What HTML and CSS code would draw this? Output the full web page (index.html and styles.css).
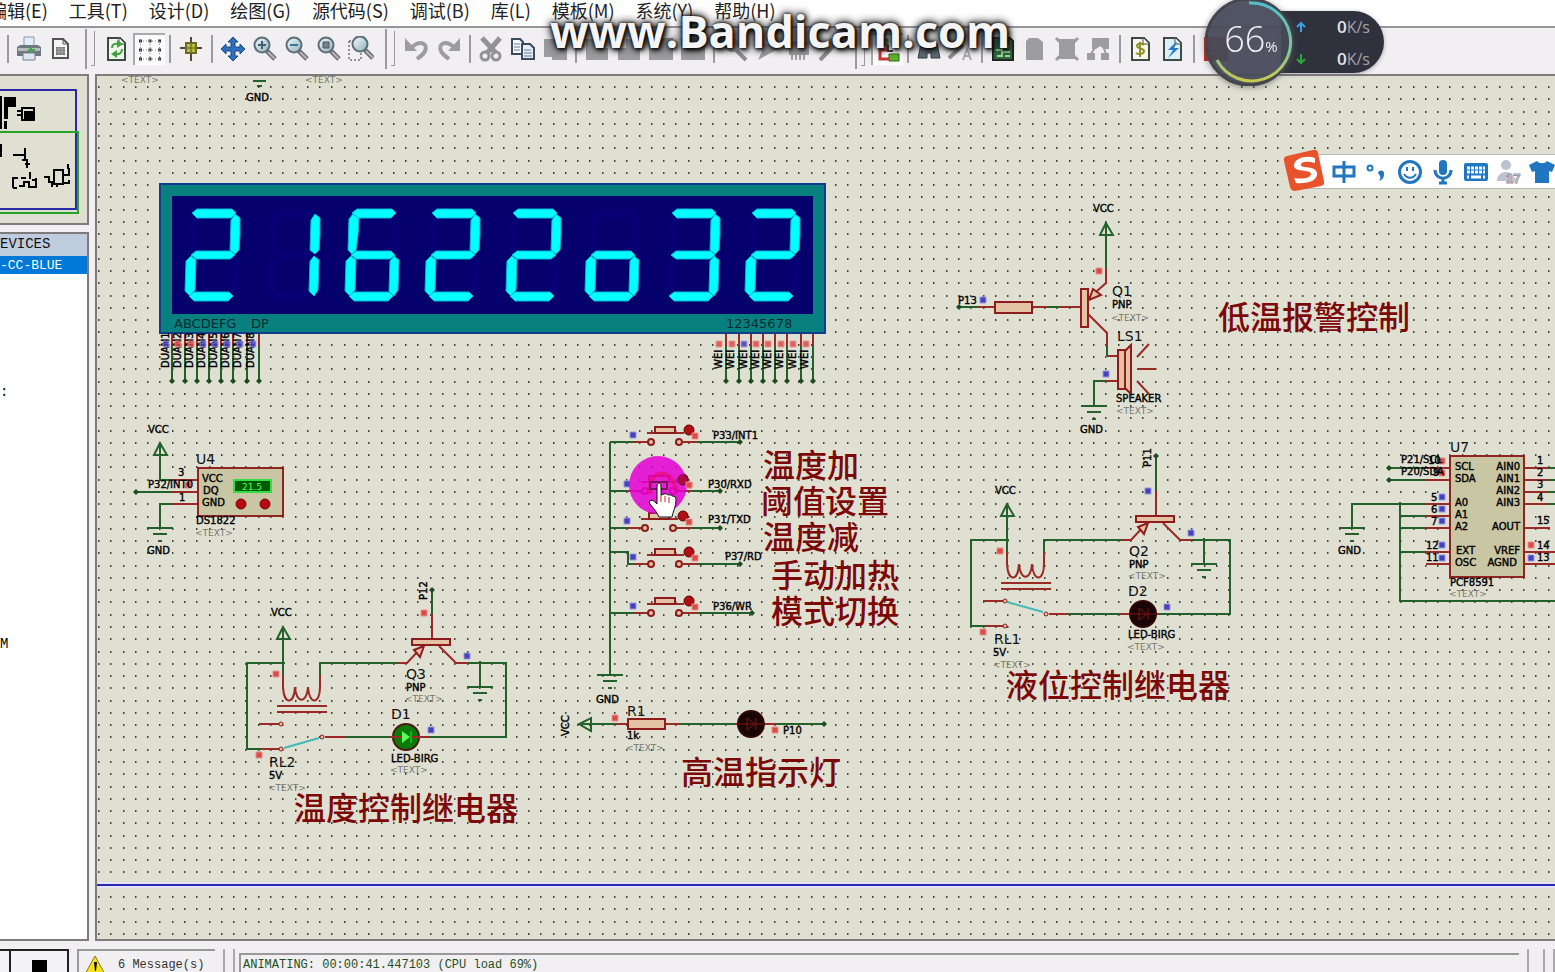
FILE: index.html
```html
<!DOCTYPE html>
<html lang="zh-CN">
<head>
<meta charset="utf-8">
<title>Schematic Capture</title>
<link rel="stylesheet" href="styles.css">
</head>
<body>
<nav class="menu">
  <a href="#">编辑(E)</a><a href="#">工具(T)</a><a href="#">设计(D)</a><a href="#">绘图(G)</a><a href="#">源代码(S)</a><a href="#">调试(B)</a><a href="#">库(L)</a><a href="#">模板(M)</a><a href="#">系统(Y)</a><a href="#">帮助(H)</a>
</nav>

<svg class="defs" aria-hidden="true">
  <defs>
    <linearGradient id="steel" x1="0" y1="0" x2="1" y2="1"><stop offset="0" stop-color="#f4fbfd"/><stop offset="1" stop-color="#8fb0bd"/></linearGradient>
    <g id="lens">
      <path d="M15 15l8 8" stroke="#6d6d70" stroke-width="5"/><path d="M16 16l7 7" stroke="#b5b5b8" stroke-width="2"/>
      <circle cx="10" cy="9" r="7.5" fill="url(#steel)" stroke="#5e6e76" stroke-width="2"/>
    </g>
    <g id="sheet"><path d="M4 2h12l5 5v17H4z" stroke="#3f4a44" stroke-width="2"/><path d="M15 2v6h6" fill="#fff" stroke="#3f4a44"/></g>
  </defs>
</svg>

<div class="toolbar" role="toolbar" aria-label="Tools">
  <span class="sep"></span>
  <button class="tool" aria-label="Print"><svg viewBox="0 0 26 26"><path d="M8 10V1h10v9" fill="#e4eefb" stroke="#8b98a8"/><path d="M1 11l3-2h18l3 2v9H1z" fill="#6f7780"/><path d="M2 12h22v3H2z" fill="#b4bcc2"/><path d="M7 17h12v7H7z" fill="#dfe8f2" stroke="#76808c"/><path d="M12 14h7M15 11v6" stroke="#49a54a" stroke-width="2"/></svg></button>
  <button class="tool" aria-label="Print area"><svg viewBox="0 0 26 26"><path d="M5 3h10l5 5v14H5z" fill="#f6f6f6" stroke="#555" stroke-width="2"/><path d="M15 3v5h5" fill="none" stroke="#555"/><path d="M8 11h9v8H8z" fill="#777"/><path d="M8 13h9M8 16h9M11 11v8M14 11v8" stroke="#aaa"/></svg></button>
  <span class="grip"></span>
  <button class="tool" aria-label="Redraw"><svg viewBox="0 0 26 26"><g fill="#eef7ea"><use href="#sheet"/></g><path d="M8 12c0-4 3-5 7-4M18 13c0 4-3 6-7 5" fill="none" stroke="#3fa13f" stroke-width="2"/><path d="M13 4l6 4-6 4zM13 14l-6 4 6 4z" fill="#3fa13f"/></svg></button>
  <button class="tool pressed" aria-label="Toggle grid"><svg viewBox="0 0 26 26"><g stroke="#333" stroke-width="3" stroke-dasharray="3 6.5"><path d="M2 4h24M2 13h24M2 22h24"/></g><g stroke="#888" stroke-dasharray="1 2"><path d="M3 4h20M3 13h20M3 22h20M3.500 4v19M13 4v19M22.500 4v19"/></g></svg></button>
  <span class="sep"></span>
  <button class="tool" aria-label="Origin"><svg viewBox="0 0 26 26"><path d="M13 1v24M2 12h22" stroke="#4c4b2b" stroke-width="2"/><path d="M8 7h10v10H8z" fill="#bcbc3e" stroke="#6a6a20" stroke-width="2"/><path d="M13 8v8M9 12h8" stroke="#5d5d22"/></svg></button>
  <span class="sep"></span>
  <button class="tool" aria-label="Pan"><svg viewBox="0 0 26 26"><path d="M13 1l5 5h-3v5h5V8l5 5-5 5v-3h-5v5h3l-5 5-5-5h3v-5H6v3l-5-5 5-5v3h5V6H8z" fill="#2f6fbd" stroke="#174a86"/></svg></button>
  <button class="tool" aria-label="Zoom in"><svg viewBox="0 0 26 26"><use href="#lens"/><path d="M6 9h8M10 5v8" stroke="#41606f" stroke-width="2"/></svg></button>
  <button class="tool" aria-label="Zoom out"><svg viewBox="0 0 26 26"><use href="#lens"/><path d="M6 9h8" stroke="#3678a0" stroke-width="2"/></svg></button>
  <button class="tool" aria-label="Zoom all"><svg viewBox="0 0 26 26"><use href="#lens"/><path d="M7 6h6v6H7z" fill="#77818a" stroke="#4c565e"/></svg></button>
  <button class="tool" aria-label="Zoom area"><svg viewBox="0 0 26 26"><path d="M1 5h12v19H1z" fill="none" stroke="#333" stroke-dasharray="2 2"/><g transform="translate(2 -1)"><use href="#lens"/></g></svg></button>
  <span class="grip"></span>
  <button class="tool" aria-label="Undo"><svg viewBox="0 0 26 26"><path d="M8 11C18 3 24 9 21 15c-1 3-4 5-8 8" fill="none" stroke="#9d9da0" stroke-width="4"/><path d="M1 2v13h12z" fill="#9d9da0"/></svg></button>
  <button class="tool" aria-label="Redo"><svg viewBox="0 0 26 26"><path d="M18 11C8 3 2 9 5 15c1 3 4 5 8 8" fill="none" stroke="#9d9da0" stroke-width="4"/><path d="M24 2v13H12z" fill="#9d9da0"/></svg></button>
  <span class="sep"></span>
  <button class="tool" aria-label="Cut"><svg viewBox="0 0 26 26"><path d="M4 2l14 15M22 2L9 17" stroke="#939396" stroke-width="5"/><circle cx="7" cy="20" r="4" fill="none" stroke="#939396" stroke-width="3"/><circle cx="18" cy="20" r="4" fill="none" stroke="#939396" stroke-width="3"/></svg></button>
  <button class="tool" aria-label="Copy"><svg viewBox="0 0 26 26"><path d="M2 3h8l3 3v12H2z" fill="#f4f7fb" stroke="#3b4b5e" stroke-width="2"/><path d="M12 8h8l4 4v11H12z" fill="#e5edf7" stroke="#3b4b5e" stroke-width="2"/><path d="M4 8h6M4 11h6M4 14h6M14 14h7M14 17h8M14 20h8" stroke="#6c7c90"/></svg></button>
  <button class="tool" aria-label="Paste"><svg viewBox="0 0 26 26"><path d="M2 3h18v6h5v15H10v-3H2z" fill="#9d9da0"/></svg></button>
  <span class="sep"></span>
  <button class="tool" aria-label="Block copy"><svg viewBox="0 0 26 26"><path d="M2 3h10v9h12v12H2z" fill="#9d9da0"/></svg></button>
  <button class="tool" aria-label="Block move"><svg viewBox="0 0 26 26"><path d="M2 12h8V3h9v9h5v12H2z" fill="#9d9da0"/></svg></button>
  <button class="tool" aria-label="Block rotate"><svg viewBox="0 0 26 26"><path d="M1 2h24v22H1z" fill="#9d9da0"/></svg></button>
  <button class="tool" aria-label="Block delete"><svg viewBox="0 0 26 26"><path d="M1 2h24v22H1z" fill="#9d9da0"/></svg></button>
  <span class="sep"></span>
  <button class="tool" aria-label="Pick parts"><svg viewBox="0 0 26 26"><path d="M13 13l11 11" stroke="#8f8f92" stroke-width="4"/><circle cx="10" cy="9" r="7" fill="#a8a8aa"/></svg></button>
  <button class="tool" aria-label="Make device"><svg viewBox="0 0 26 26"><path d="M2 3l22 10L4 24l4-9z" fill="#a0a0a3"/></svg></button>
  <button class="tool" aria-label="Packaging"><svg viewBox="0 0 26 26"><path d="M3 5h20v14H3z" fill="#a0a0a3"/><path d="M6 19v5M10 19v5M14 19v5M18 19v5" stroke="#a0a0a3" stroke-width="2"/></svg></button>
  <button class="tool" aria-label="Decompose"><svg viewBox="0 0 26 26"><path d="M2 24L20 5" stroke="#8f8f92" stroke-width="4"/><path d="M12 2l12 8-3 4-12-8z" fill="#8f8f92"/></svg></button>
  <span class="grip"></span>
  <button class="tool pressed" aria-label="Wire autorouter"><svg viewBox="0 0 26 26"><path d="M3 2h10v6H3zM14 17h10v7H14z" fill="#5cb52c" stroke="#2d6418"/><path d="M12 8v5H5v9h9" fill="none" stroke="#c43a36" stroke-width="3"/><path d="M13 8v6h5" fill="none" stroke="#333" stroke-width="2"/></svg></button>
  <span class="sep"></span>
  <button class="tool" aria-label="Search"><svg viewBox="0 0 26 26"><path d="M5 8h6v5h4V8h6l3 14h-9v-5h-4v5H2z" fill="#5b6b74" stroke="#2e3c44"/></svg></button>
  <button class="tool" aria-label="Property assignment"><svg viewBox="0 0 26 26"><path d="M1 22L15 9" stroke="#8f8f92" stroke-width="4"/><path d="M15 24l4-11 4 11M16 20h6" fill="none" stroke="#aaa" stroke-width="2"/></svg></button>
  <span class="sep"></span>
  <button class="tool" aria-label="Design explorer"><svg viewBox="0 0 26 26"><path d="M3 2h17l3 3v19H3z" fill="#2e6a3b" stroke="#222" stroke-width="2"/><path d="M6 14h6v-4h7M7 20h5v-4h8M15 20h5" fill="none" stroke="#9ed79a" stroke-width="2"/></svg></button>
  <button class="tool" aria-label="New sheet"><svg viewBox="0 0 26 26"><path d="M4 5l3-3h9l5 4v18H4z" fill="#9d9da0"/></svg></button>
  <button class="tool" aria-label="Remove sheet"><svg viewBox="0 0 26 26"><path d="M5 3h16v20H5z" fill="#9d9da0"/><path d="M2 2l22 22M24 2L2 24" stroke="#9d9da0" stroke-width="3"/></svg></button>
  <button class="tool" aria-label="Exit to parent"><svg viewBox="0 0 26 26"><path d="M6 2h17v11h-5l-4-3-4 3H6z" fill="#9d9da0"/><path d="M10 10l-5 8M17 10l3 8" stroke="#9d9da0" stroke-width="2"/><path d="M1 17h8v7H1zM15 17h8v7h-8z" fill="#9d9da0"/></svg></button>
  <span class="sep"></span>
  <button class="tool" aria-label="Bill of materials"><svg viewBox="0 0 26 26"><g fill="#f6f7ee"><use href="#sheet"/></g><path d="M16 9c-2-2-7-2-7 1s7 2 7 5-5 4-8 2M12 6v15" fill="none" stroke="#8f8f1e" stroke-width="2"/></svg></button>
  <button class="tool" aria-label="Electrical rules"><svg viewBox="0 0 26 26"><g fill="#dcf0fb"><use href="#sheet"/></g><path d="M16 6l-8 8h5l-5 8 11-10h-5l3-6z" fill="#2a79c4"/></svg></button>
  <span class="sep"></span>
  <button class="tool" aria-label="Netlist to layout"><svg viewBox="0 0 26 26"><path d="M2 1h24v24H2z" fill="#c3231d"/><path d="M5 14V5h4v9M5 10h4M12 14V5h4v4h-4l4 5M23 5h-4v9h4M19 9h3M4 18h20" fill="none" stroke="#f0a090" stroke-width="1"/></svg></button>
</div>

<main class="work">
  <aside class="side">
    <div class="overview">
      <svg aria-label="Sheet overview">
        <path d="M-2 14h78v119h-80" fill="none" stroke="#2a2aa8" stroke-width="2"/>
        <path d="M-2 56h80v81h-80" fill="none" stroke="#28a428" stroke-width="2"/>
        <path d="M0 20h2v33H0zM4 21h12v10H8v12H4zM4 45h3v8H4zM24 35h9v9h-9zM0 68h2v13H0zM0 93h2M0 99h2"/>
        <g fill="none" stroke="#000" stroke-width="2"><path d="M22 32h12v12H22zM17 35h5M17 39h5M13 79h12M25 72v12M22 84h5v8M25 88h5M13 101v11M13 102h5M13 112h4M19 110h5v-4h5v5h7v-9M21 102h5M30 96v7M32 104h4M44 101h5v5h5M54 94h9v14h-9zM48 106h4v5M64 99h5v-7M64 107h5v-3M68 88v5M57 109v2"/></g>
      </svg>
    </div>
    <section class="devices">
      <h2>EVICES</h2>
      <ul><li class="on">-CC-BLUE</li><li class="row-s">:</li><li class="row-m">M</li></ul>
    </section>
  </aside>

  <svg class="sheet" aria-label="Schematic">
    <defs>
      <pattern id="grid" x="98" y="86" width="86" height="135" patternUnits="userSpaceOnUse">
        <g id="gridrows">
          <g id="grow" fill="#45453c"><path id="dots" d="M0 0h1v2h-1zM12 0h1v2h-1zM25 0h1v2h-1zM37 0h1v2h-1zM49 0h1v2h-1zM61 0h1v2h-1zM74 0h1v2h-1z"/><path opacity=".5" d="M1 0h1v2h-1zM13 0h1v2h-1zM26 0h1v2h-1zM38 0h1v2h-1zM50 0h1v2h-1zM62 0h1v2h-1zM75 0h1v2h-1z"/></g>
          <use href="#grow" y="12"/><use href="#grow" y="25"/><use href="#grow" y="37"/><use href="#grow" y="49"/><use href="#grow" y="61"/><use href="#grow" y="74"/><use href="#grow" y="86"/><use href="#grow" y="98"/><use href="#grow" y="110"/><use href="#grow" y="123"/>
        </g>
      </pattern>
      <path id="sa" d="M192 213l5-4h35l4 4-5 5h-34z"/>
      <path id="sb" d="M235 214l5 4v17l-1 15-4 4-5-4 1-30z"/>
      <path id="sc" d="M234 256l5 4-1 30-4 6-5-5 1-30z"/>
      <path id="sd" d="M189 296l5-4h35l4 4-5 5h-34z"/>
      <path id="se" d="M191 256l5 4-1 30-5 6-5-5 1-30z"/>
      <path id="sf" d="M193 214l6 4-1 17-2 15-4 4-4-4 1-31z"/>
      <path id="sg" d="M191 255l5-4h35l4 4-5 4h-34z"/>
      <g id="d2"><use href="#sa"/><use href="#sb"/><use href="#sg"/><use href="#se"/><use href="#sd"/></g>
      <g id="d8"><use href="#d2"/><use href="#sc"/><use href="#sf"/></g>
      <path id="rs" class="hi" d="M-3-3h6v6h-6z"/>
      <path id="bs" class="lo" d="M-3-3h6v6h-6z"/>
      <g id="gnd" class="g"><path d="M-13 0h26M-7 6h14M-2 13h4"/></g>
      <g id="arrow" class="g"><path d="M0 0l-6 12H7z"/></g>
      <path id="end" d="M-3 0l3-3 3 3-3 3z" fill="#1e4a1e"/>
      <g id="pin"><path class="r" d="M0 334v12"/><path class="g" d="M0 346v36"/><use href="#end" y="381"/></g>
      <g id="key">
        <path class="r" d="M633 0h15M683 0h15M647-9h37"/><path class="part" d="M655-15h20v6h-20z"/>
        <circle class="part" cx="651" cy="0" r="3"/><circle class="part" cx="679" cy="0" r="3"/>
        <circle cx="689" cy="-12" r="5" fill="#b01014" stroke="#600"/><use href="#rs" x="695" y="-6"/><use href="#bs" x="633" y="-7"/>
      </g>
      <g id="relay">
        <use href="#arrow" x="283" y="627"/>
        <path class="g" d="M283 627v48M285 663h-38v86h14M320 675v-12h78M432 589v25M468 663h38v74h-76M480 661v26M345 737h48"/>
        <use href="#gnd" x="480" y="687"/>
        <path class="r" d="M283 675v12c1 18 11 18 12 0c1 17 12 17 13 0c1 18 12 18 12 0v-12M277 706h50M277 712h50M259 724h21M261 749h19M398 663h9l14-15M432 614v25M439 646l17 17h12M325 737h20M390 737h40"/>
        <path class="part" d="M412 639h38v6h-38zM424 646l-4 11-6-7z"/>
        <g class="part"><circle cx="281" cy="724" r="2"/><circle cx="281" cy="749" r="2"/><circle cx="322" cy="737" r="2"/></g>
        <use href="#rs" x="276" y="674"/><use href="#rs" x="259" y="755"/>
      </g>
    </defs>

    <g transform="translate(-97 -76)">
      <rect x="97" y="84" width="100%" height="100%" fill="url(#grid)"/>
      <path d="M97 885h4000" stroke="#e4e2f4" stroke-width="6"/><path d="M97 885h4000" stroke="#2a2ab0" stroke-width="2"/>

      <g class="dim"><text x="121" y="83">&lt;TEXT&gt;</text><text x="305" y="83">&lt;TEXT&gt;</text></g>
      <path class="g" d="M253 81h13M257 86h5"/><text class="lbl" x="246" y="101">GND</text>

      <path d="M157 181h671v155H157z" fill="#e0e0d2"/>
      <path d="M160 184h665v149H160z" fill="#088080" stroke="#143c8c" stroke-width="2"/>
      <path d="M172 196h641v118H172z" fill="#05006c"/>
      <g fill="#060074"><use href="#d8"/><use href="#d8" x="80"/><use href="#d8" x="160"/><use href="#d8" x="240"/><use href="#d8" x="320"/><use href="#d8" x="400"/><use href="#d8" x="480"/><use href="#d8" x="560"/></g>
      <g fill="#00ffff" stroke="#02b8d8" stroke-width="1">
        <use href="#d2"/>
        <use href="#sb" x="80"/><use href="#sc" x="80"/>
        <g transform="translate(160 0)"><use href="#sa"/><use href="#sf"/><use href="#sg"/><use href="#se"/><use href="#sc"/><use href="#sd"/></g>
        <use href="#d2" x="240"/><use href="#d2" x="321"/>
        <g transform="translate(400 0)"><use href="#sg"/><use href="#se"/><use href="#sc"/><use href="#sd"/></g>
        <g transform="translate(480 0)"><use href="#sa"/><use href="#sb"/><use href="#sg"/><use href="#sc"/><use href="#sd"/></g>
        <use href="#d2" x="560"/>
      </g>
      <g class="disp"><text x="174" y="328">ABCDEFG</text><text x="251" y="328">DP</text><text x="726" y="328">12345678</text></g>
      <use href="#pin" x="172"/><use href="#pin" x="185"/><use href="#pin" x="197"/><use href="#pin" x="209"/><use href="#pin" x="221"/><use href="#pin" x="233"/><use href="#pin" x="247"/><use href="#pin" x="259"/>
      <use href="#pin" x="726"/><use href="#pin" x="739"/><use href="#pin" x="751"/><use href="#pin" x="763"/><use href="#pin" x="775"/><use href="#pin" x="787"/><use href="#pin" x="801"/><use href="#pin" x="813"/>
      <g class="lbl">
        <text transform="translate(169 368) rotate(-90)">DUAN1</text><text transform="translate(181 368) rotate(-90)">DUAN2</text><text transform="translate(193 368) rotate(-90)">DUAN3</text><text transform="translate(205 368) rotate(-90)">DUAN4</text><text transform="translate(217 368) rotate(-90)">DUAN5</text><text transform="translate(229 368) rotate(-90)">DUAN6</text><text transform="translate(241 368) rotate(-90)">DUAN7</text><text transform="translate(254 368) rotate(-90)">DUAN8</text>
        <text transform="translate(722 369) rotate(-90)">WEI</text><text transform="translate(734 369) rotate(-90)">WEI</text><text transform="translate(747 369) rotate(-90)">WEI</text><text transform="translate(759 369) rotate(-90)">WEI</text><text transform="translate(771 369) rotate(-90)">WEI</text><text transform="translate(783 369) rotate(-90)">WEI</text><text transform="translate(796 369) rotate(-90)">WEI</text><text transform="translate(808 369) rotate(-90)">WEI</text>
      </g>
      <g opacity=".85">
      <use href="#bs" x="166" y="344"/><use href="#rs" x="178" y="344"/><use href="#rs" x="191" y="344"/><use href="#bs" x="203" y="344"/><use href="#bs" x="215" y="344"/><use href="#bs" x="227" y="344"/><use href="#bs" x="240" y="344"/><use href="#bs" x="253" y="344"/>
      <use href="#rs" x="719" y="344"/><use href="#rs" x="732" y="344"/><use href="#bs" x="744" y="344"/><use href="#rs" x="756" y="344"/><use href="#rs" x="768" y="344"/><use href="#rs" x="781" y="344"/><use href="#rs" x="793" y="344"/><use href="#rs" x="806" y="344"/>
      </g>

      <use href="#arrow" x="160" y="443"/><path class="g" d="M160 443v37h12M136 492h36M172 504h-12v24"/><use href="#end" x="136" y="492"/><use href="#gnd" x="160" y="528"/>
      <path class="r" d="M172 480h25M172 492h25M172 504h25"/><path class="chip" d="M198 468h85v48h-85z"/>
      <path d="M234 480h37v12h-37z" fill="#005800" stroke="#30e040" stroke-width="2"/><text class="lcd" x="242" y="490">21.5</text>
      <g fill="#b80c10" stroke="#700"><circle cx="241" cy="504" r="5"/><circle cx="265" cy="504" r="5"/></g>
      <use href="#rs" x="188" y="485"/>
      <text class="ref" x="196" y="464">U4</text>
      <g class="lbl"><text x="148" y="433">VCC</text><text x="178" y="476">3</text><text x="148" y="488">P32/INT0</text><text x="179" y="501">1</text><text x="202" y="482">VCC</text><text x="203" y="494">DQ</text><text x="202" y="506">GND</text><text x="196" y="524">DS1822</text><text x="147" y="554">GND</text></g>

      <use href="#relay"/><use href="#relay" x="724" y="-123"/>
      <path class="g" d="M1156 455v15"/><use href="#end" x="1156" y="456"/><use href="#end" x="432" y="590"/>
      <path d="M284 748l35-10M1007 602l36 10" stroke="#45b8b8" stroke-width="2"/>
      <use href="#rs" x="424" y="613"/><use href="#bs" x="467" y="656"/><use href="#bs" x="431" y="730"/>
      <circle cx="406" cy="737" r="13" fill="#0c7a08" stroke="#4a1a10" stroke-width="2"/><path d="M392 737h28" class="r"/><path d="M402 731l8 6-8 6z" fill="#5f5"/><path d="M411 731v12" stroke="#0f3" />
      <path class="g" d="M1068 614h52"/><path class="r" d="M1120 614h40"/>
      <g class="led"><circle cx="1143" cy="614" r="13"/><path d="M1130 614h26M1139 608l8 6-8 6zM1148 608v12"/></g>
      <use href="#bs" x="1148" y="491"/><use href="#bs" x="1191" y="533"/><use href="#bs" x="1167" y="607"/>
      <g class="ref"><text x="406" y="679">Q3</text><text x="391" y="719">D1</text><text x="269" y="767">RL2</text><text x="1129" y="556">Q2</text><text x="1128" y="596">D2</text><text x="994" y="644">RL1</text></g>
      <g class="lbl"><text x="271" y="616">VCC</text><text x="406" y="691">PNP</text><text x="391" y="762">LED-BIRG</text><text x="269" y="779">5V</text><text transform="translate(427 600) rotate(-90)">P12</text>
        <text x="995" y="494">VCC</text><text x="1129" y="568">PNP</text><text x="1128" y="638">LED-BIRG</text><text x="993" y="656">5V</text><text transform="translate(1151 467) rotate(-90)">P11</text></g>

      <path class="g" d="M610 442v233M610 442h23M610 491h17M610 528h17M610 552h18v12h5M610 613h23M698 442h42M692 491h28M691 528h29M698 564h42M698 613h54"/>
      <use href="#end" x="740" y="442"/><use href="#end" x="720" y="491"/><use href="#end" x="720" y="528"/><use href="#end" x="740" y="564"/><use href="#end" x="752" y="613"/>
      <use href="#gnd" x="610" y="675"/>
      <use href="#key" y="442"/><use href="#key" x="-6" y="491"/><use href="#key" x="-6" y="528"/><use href="#key" y="564"/><use href="#key" y="613"/>
      <circle cx="658" cy="485" r="29" fill="#e400d4" opacity=".86"/>
      <path d="M650 494v-8c2-14 14-16 22-7l5 12" fill="none" stroke="#f00868" stroke-width="4" opacity=".6"/><path d="M650 482h17v7h-17z" fill="none" stroke="#801060" stroke-width="2"/>
      <circle cx="683" cy="480" r="5" fill="#b00840" stroke="#700030"/><use href="#rs" x="689" y="485"/>
      <path d="M657 486c0-4 4-4 4 0v9l3-1c3-1 4 1 4 1 3-1 4 1 4 1 3 0 4 1 4 4 0 7-3 11-4 17h-13c-2-5-6-9-9-13-2-4 2-5 5-2l2 2z" fill="#fff" stroke="#111"/>
      <path d="M661 495v7M665 496v6M669 497v6" stroke="#c22"/>
      <g class="lbl"><text x="713" y="439">P33/INT1</text><text x="708" y="488">P30/RXD</text><text x="708" y="523">P31/TXD</text><text x="725" y="560">P37/RD</text><text x="713" y="610">P36/WR</text><text x="596" y="703">GND</text></g>

      <path class="g" d="M579 724h36M680 724h55M775 724h50M591 718v13l-12-7z"/><path class="r" d="M615 724h65M735 724h40"/><use href="#end" x="824" y="724"/>
      <path class="part" d="M628 719h37v10h-37z"/><use href="#rs" x="615" y="718"/><use href="#rs" x="775" y="730"/>
      <g class="led"><circle cx="751" cy="724" r="13"/><path d="M738 724h26M747 718l8 6-8 6zM756 718v12"/></g>
      <text class="ref" x="627" y="716">R1</text>
      <g class="lbl"><text x="627" y="739">1k</text><text x="783" y="734">P10</text><text transform="translate(569 736) rotate(-90)">VCC</text></g>

      <use href="#arrow" x="1106" y="223"/><path class="g" d="M1106 223v45M958 307h20M1048 307h12M1107 346v10M1106 381h-12v25"/><use href="#end" x="959" y="307"/>
      <path class="r" d="M1106 268v15l-18 16M978 307h70M1060 307h21M1088 314l19 19v13M1107 356h11M1118 381h-12M1137 357l12-13M1137 369h18M1137 381l12 13"/>
      <path class="part" d="M995 302h37v11h-37zM1081 289h7v38h-7zM1089 300l4-11 8 6zM1118 350h7v39h-7zM1125 351l6-6v49l-6-6z"/>
      <use href="#gnd" x="1094" y="406"/><use href="#rs" x="1099" y="271"/><use href="#bs" x="983" y="300"/><use href="#bs" x="1106" y="374"/>
      <g class="ref"><text x="1112" y="296">Q1</text><text x="1117" y="341">LS1</text></g>
      <g class="lbl"><text x="1093" y="212">VCC</text><text x="958" y="304">P13</text><text x="1112" y="308">PNP</text><text x="1116" y="402">SPEAKER</text><text x="1080" y="433">GND</text></g>

      <path class="g" d="M1388 468h40M1388 480h40M1426 504h-74v24M1400 516h26M1400 528h26M1400 552h26M1400 502v99h2600M1548 468h2400M1548 480h2400M1548 492h2400M1548 504h2400"/>
      <path class="r" d="M1426 468h24M1426 480h24M1426 504h24M1426 516h24M1426 528h24M1426 552h24M1426 564h24M1524 468h24M1524 480h24M1524 492h24M1524 504h24M1524 528h26M1524 552h31M1524 564h31"/>
      <use href="#gnd" x="1352" y="528"/><use href="#end" x="1389" y="468"/><use href="#end" x="1389" y="480"/>
      <path class="chip" d="M1450 456h74v121h-74z"/>
      <use href="#rs" x="1442" y="461"/><use href="#rs" x="1442" y="473"/><use href="#bs" x="1442" y="497"/><use href="#bs" x="1442" y="509"/><use href="#bs" x="1442" y="521"/><use href="#bs" x="1442" y="545"/><use href="#bs" x="1442" y="558"/><use href="#rs" x="1531" y="545"/><use href="#bs" x="1531" y="558"/>
      <text class="ref" x="1450" y="452">U7</text>
      <g class="lbl"><text x="1401" y="463">P21/SCL</text><text x="1401" y="475">P20/SDA</text><text x="1428" y="464">10</text><text x="1433" y="476">9</text><text x="1431" y="501">5</text><text x="1431" y="513">6</text><text x="1431" y="525">7</text><text x="1426" y="549">12</text><text x="1426" y="561">11</text>
        <text x="1455" y="470">SCL</text><text x="1455" y="482">SDA</text><text x="1455" y="506">A0</text><text x="1455" y="518">A1</text><text x="1455" y="530">A2</text><text x="1456" y="554">EXT</text><text x="1455" y="566">OSC</text>
        <text x="1537" y="464">1</text><text x="1537" y="476">2</text><text x="1537" y="488">3</text><text x="1537" y="501">4</text><text x="1537" y="524">15</text><text x="1537" y="549">14</text><text x="1537" y="561">13</text><text x="1450" y="586">PCF8591</text><text x="1338" y="554">GND</text></g>
      <g class="lbl rt"><text x="1520" y="470">AIN0</text><text x="1520" y="482">AIN1</text><text x="1520" y="494">AIN2</text><text x="1520" y="506">AIN3</text><text x="1520" y="530">AOUT</text><text x="1520" y="554">VREF</text><text x="1517" y="566">AGND</text></g>

      <g class="dim"><text x="195" y="536">&lt;TEXT&gt;</text><text x="405" y="702">&lt;TEXT&gt;</text><text x="390" y="773">&lt;TEXT&gt;</text><text x="268" y="791">&lt;TEXT&gt;</text><text x="626" y="751">&lt;TEXT&gt;</text><text x="1111" y="321">&lt;TEXT&gt;</text><text x="1116" y="414">&lt;TEXT&gt;</text><text x="1128" y="579">&lt;TEXT&gt;</text><text x="1127" y="650">&lt;TEXT&gt;</text><text x="993" y="668">&lt;TEXT&gt;</text><text x="1449" y="597">&lt;TEXT&gt;</text></g>
      <g class="note"><text x="763" y="477">温度加</text><text x="761" y="513">阈值设置</text><text x="763" y="549">温度减</text><text x="771" y="587">手动加热</text><text x="771" y="623">模式切换</text><text x="681" y="784">高温指示灯</text><text x="294" y="820">温度控制继电器</text><text x="1218" y="329">低温报警控制</text><text x="1006" y="697">液位控制继电器</text></g>
    </g>
  </svg>
</main>

<footer class="status">
  <button class="sim part-sim" aria-label="Pause"></button><button class="sim" aria-label="Stop"><span class="stop"></span></button>
  <div class="messages"><svg viewBox="0 0 24 24"><path d="M12 1l12 22H0z" fill="#f6e21a" stroke="#8a7a10"/><path d="M11 7h3l-1 9h-1zM11 18h3v3h-3z"/></svg><span>6 Message(s)</span></div>
  <i class="rule"></i><i class="rule"></i>
  <output class="anim">ANIMATING: 00:00:41.447103 (CPU load 69%)</output>
  <i class="rule"></i><i class="rule far"></i><i class="rule"></i>
</footer>

<div class="watermark">www.Bandicam.com</div>

<div class="meter">
  <div class="speeds">
    <svg viewBox="0 0 12 12"><path d="M6 11V2M2 6l4-4 4 4" fill="none" stroke="#3aa0e8" stroke-width="2"/></svg><span class="speed"><b>0</b>K/s</span>
    <svg viewBox="0 0 12 12"><path d="M6 1v9M2 6l4 4 4-4" fill="none" stroke="#28a838" stroke-width="2"/></svg><span class="speed"><b>0</b>K/s</span>
  </div>
  <div class="dial">
    <svg viewBox="0 0 88 88"><defs><linearGradient id="arc" x1="0" y1="0" x2="0" y2="1"><stop offset="0" stop-color="#4fc0cc"/><stop offset=".6" stop-color="#7cc79a"/><stop offset="1" stop-color="#c9c850"/></linearGradient></defs><circle cx="44" cy="44" r="43" fill="#454858" fill-opacity=".86" stroke="#45464c" stroke-width="3"/><path d="M44 5a39 39 0 1 1-32 57" fill="none" stroke="url(#arc)" stroke-width="3"/></svg>
    <span class="pct">66<small>%</small></span>
  </div>
</div>

<div class="ime">
  <svg class="logo" viewBox="0 0 42 42"><path d="M1 12q-1-4 3-5L30 1q4-1 5 3l6 28q1 4-3 5l-26 5q-4 0-5-4z" fill="#e8532b"/><path d="M32 9c-9-3-20 0-21 7-1 8 17 4 17 9-1 5-10 5-17 4l2 5c11 1 22-2 21-10-1-8-16-4-16-8 0-4 7-4 14-2z" fill="#fff"/></svg>
  <svg viewBox="0 0 24 24"><path d="M2 7h20v9H2zM12 1v22" fill="none" stroke="#2176c0" stroke-width="3"/></svg>
  <svg viewBox="0 0 24 24"><circle cx="5" cy="8" r="2.500" fill="none" stroke="#2176c0" stroke-width="2"/><path d="M13 13a3 3 0 1 1 6 1c0 4-2 6-5 7 1-2 2-3 1-5z" fill="#2176c0"/></svg>
  <svg viewBox="0 0 24 24"><circle cx="12" cy="12" r="10.500" fill="none" stroke="#2176c0" stroke-width="3"/><path d="M9 7v4M15 7v4M6 14c3 5 9 5 12 0" fill="none" stroke="#2176c0" stroke-width="2"/></svg>
  <svg viewBox="0 0 24 24"><rect x="8" y="0" width="8" height="15" rx="4" fill="#2176c0"/><path d="M4 10c0 11 16 11 16 0M12 18v5M8 23h8" fill="none" stroke="#2176c0" stroke-width="3"/></svg>
  <svg viewBox="0 0 24 24"><rect x="0" y="3" width="24" height="18" rx="2" fill="#2176c0"/><path d="M3 8h18M3 12h18" stroke="#fff" stroke-width="3" stroke-dasharray="3 1"/><path d="M3 17h2M7 17h10M19 17h2" stroke="#fff" stroke-width="3"/></svg>
  <svg viewBox="0 0 24 24"><circle cx="9" cy="5" r="5" fill="#bcc2cf"/><path d="M0 21c0-12 18-12 18 0z" fill="#bcc2cf"/><text class="badge" x="9" y="23">17</text></svg>
  <svg viewBox="0 0 24 24"><path d="M7 1c2 3 8 3 10 0l8 4-3 7-3-1v12H5V11l-3 1-3-7z" fill="#2176c0"/></svg>
</div>
</body>
</html>
```

FILE: styles.css
```css
* { box-sizing: border-box; }
body {
  margin: 0;
  height: 100vh;
  overflow: hidden;
  position: relative;
  display: flex;
  flex-direction: column;
  background: #f1eff2;
  font-family: "Noto Sans CJK SC", sans-serif;
}
.defs { position: absolute; width: 0; height: 0; }
button { padding: 0; border: 0; background: none; font: inherit; }

.menu {
  flex: none;
  display: flex;
  gap: 21px;
  height: 26px;
  padding-bottom: 6px;
  margin-left: -11px;
  background: #fff;
  align-items: center;
}
.menu a { color: #222; font-size: 18px; line-height: 20px; text-decoration: none; white-space: nowrap; }

.toolbar {
  flex: none;
  display: flex;
  align-items: center;
  height: 48px;
  padding: 0 0 4px 3px;
  border-top: 2px solid #98969a;
  overflow: hidden;
}
.tool { flex: none; width: 32px; height: 32px; display: grid; place-items: center; }
.tool svg { width: 26px; height: 26px; }
.pressed { background: #fbfafc; border: 1px solid #aaa; border-width: 2px 0 0 2px; }
.sep { flex: none; width: 10px; height: 28px; background: linear-gradient(#9c9a9e, #9c9a9e) 4px 0 / 2px 100% no-repeat; }
.grip {
  flex: none;
  width: 24px;
  height: 40px;
  background:
    linear-gradient(#9c9a9e, #9c9a9e) 8px 0 / 2px 100% no-repeat,
    linear-gradient(#9c9a9e, #9c9a9e) 17px 2px / 1px 34px no-repeat,
    linear-gradient(#9c9a9e, #9c9a9e) 14px 36px / 4px 1px no-repeat;
}

.work { flex: 1; min-height: 0; display: flex; gap: 6px; }
.side { flex: none; width: 89px; display: flex; flex-direction: column; gap: 7px; }
.overview { flex: none; height: 151px; background: #e0e0d2; border: 2px solid #7d7b7c; border-left: 0; overflow: hidden; }
.overview svg { display: block; width: 100%; height: 100%; }
.devices { flex: 1; min-height: 0; background: #fff; border: 2px solid #7d7b7c; border-left: 0; overflow: hidden; font-family: "Liberation Mono", monospace; font-size: 14px; }
.devices h2 { margin: 0; height: 22px; line-height: 20px; font-size: 14px; font-weight: 400; background: #bfccde; color: #111; }
.devices ul { margin: 0; padding: 0; list-style: none; display: grid; grid-auto-rows: 18px; line-height: 20px; }
.devices .on { background: #0078d7; color: #fff; font-size: 13px; }
.row-s { grid-row: 8; }
.row-m { grid-row: 22; }

.sheet { flex: 1; min-width: 0; height: 100%; background: #e0e0d2; border: 2px solid #7d7b7c; border-right: 0; }
.sheet text { font-family: "DejaVu Sans", sans-serif; }
.sheet .lbl, .sheet .lbl text { font-size: 10px; fill: #000; stroke: #000; stroke-width: .4px; }
.sheet .rt text { text-anchor: end; }
.sheet .ref, .sheet .ref text { font-size: 14px; fill: #111; }
.sheet .dim text { font-size: 9px; fill: #77776e; }
.sheet .disp text { font-size: 13px; fill: #022c30; }
.sheet .lcd { font-size: 9px; fill: #4dff5a; }
.sheet .note text { font-family: "Noto Sans CJK SC", sans-serif; font-size: 32px; font-weight: 500; fill: #7c0808; }
.g { fill: none; stroke: #24602a; stroke-width: 2; }
.r { fill: none; stroke: #9a2a26; stroke-width: 2; }
.part { fill: #e3c3a4; stroke: #8e1c1c; stroke-width: 2; }
.part circle { stroke-width: 1; }
.chip { fill: #c9c6a4; stroke: #8e2420; stroke-width: 2; }
.hi { fill: #dc4a4a; stroke: #e89088; stroke-width: 1; }
.lo { fill: #4440c0; stroke: #9a98dc; stroke-width: 1; }
.led circle { fill: #180404; stroke: #300808; stroke-width: 2; }
.led path { fill: none; stroke: #7a1414; stroke-width: 1; }

.status { flex: none; height: 31px; display: flex; align-items: flex-start; padding-top: 8px; overflow: hidden; font-family: "Liberation Mono", monospace; font-size: 12px; }
.sim { flex: none; width: 58px; height: 34px; display: grid; place-items: center; border: 1px solid #222; border-width: 2px 2px 0 0; background: #f4f3f5; }
.part-sim { width: 11px; }
.stop { width: 15px; height: 15px; background: #000; }
.messages { flex: none; width: 138px; height: 40px; margin-left: 8px; padding-left: 4px; display: flex; gap: 11px; border: 1px solid #999; border-width: 2px 0 0 2px; line-height: 28px; color: #333; }
.messages svg { width: 24px; height: 24px; margin-top: 4px; }
.rule { flex: none; width: 2px; height: 40px; margin-left: 8px; background: #aaa8ac; }
.anim { flex: 1; height: 40px; margin: 4px 0 0 4px; padding-left: 2px; border: 1px solid #999; border-width: 2px 0 0 2px; line-height: 20px; color: #1d4f22; white-space: nowrap; }
.far { margin-left: 14px; }

.watermark {
  position: absolute;
  left: 550px;
  top: 0;
  font: 700 45px/62px "Open Sans", sans-serif;
  color: #f4f4f4;
  text-shadow: 0 0 3px #000, 2px 2px 5px #000, 0 0 8px #222, 0 0 10px #333;
  white-space: nowrap;
}

.meter { position: absolute; left: 1205px; top: -2px; width: 179px; height: 88px; }
.speeds {
  position: absolute;
  inset: 13px 0 13px 76px;
  padding: 0 14px 0 14px;
  display: grid;
  grid-template-columns: 16px 1fr;
  align-items: center;
  background: #2f313d;
  border-radius: 0 31px 31px 0;
  box-shadow: 0 1px 4px #6668;
}
.speeds svg { width: 12px; }
.speed { text-align: right; font: 16px/31px "Open Sans", sans-serif; color: #a2a3aa; }
.speed b { font-size: 17px; font-weight: 600; color: #e4e4e8; }
.dial { position: absolute; inset: 0 auto 0 0; width: 88px; display: grid; place-items: center; filter: drop-shadow(0 1px 3px #555a); }
.dial svg { grid-area: 1 / 1; width: 88px; height: 88px; }
.pct { grid-area: 1 / 1; z-index: 1; font: 300 36px/44px "Open Sans", sans-serif; color: #f0f0f4; padding-left: 4px; }
.pct small { font-size: 15px; font-weight: 400; }

.ime { position: absolute; left: 1300px; right: 0; top: 154px; height: 35px; display: flex; align-items: center; gap: 9px; padding-left: 32px; background: #fff; border: 1px solid #b8b8b4; border-width: 1px 0; overflow: visible; }
.ime svg { flex: none; width: 24px; height: 24px; overflow: visible; }
.ime .logo { position: absolute; left: -17px; top: -6px; width: 42px; height: 42px; }
.badge { font: 700 13px "Liberation Sans", sans-serif; fill: #fff; stroke: #8f96a6; stroke-width: 1px; }
```
